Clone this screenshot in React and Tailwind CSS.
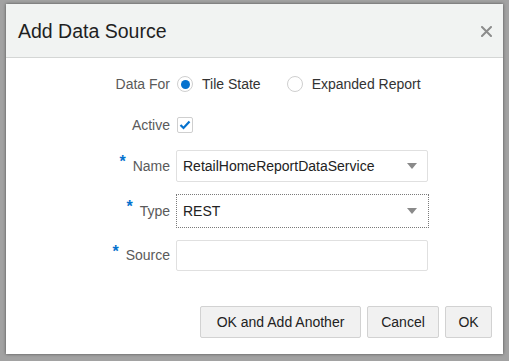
export default function App() {
  const font = { fontFamily: '"Liberation Sans", Arial, sans-serif' };
  const Caret = () => (
    <svg width="10" height="6" viewBox="0 0 10 6" className="shrink-0">
      <path d="M0 0 L10 0 L5 6 Z" fill="#8a8a8a" />
    </svg>
  );
  const Req = () => (
    <span className="text-[#0572ce] text-[16px] font-bold leading-none mr-[7px] -translate-y-[4px]">*</span>
  );
  return (
    <div className="w-[509px] h-[361px] bg-[#a2a2a2] pt-[4px] pl-[6px] overflow-hidden" style={font}>
      <div className="w-[497px] h-[350px] bg-white flex flex-col shadow-[0_0_3px_rgba(0,0,0,0.5)]">
        <div className="h-[54px] bg-[#f1f3f2] border-b border-[#d4d6d5] flex items-center justify-between pl-[12px] pr-[11px] pt-[2px]">
          <span className="text-[19.5px] text-[#1f1f1f]">Add Data Source</span>
          <svg width="11" height="11" viewBox="0 0 11 11">
            <path d="M1 1 L10 10 M10 1 L1 10" stroke="#8c8c8c" strokeWidth="2" strokeLinecap="round" />
          </svg>
        </div>
        <div className="grid grid-cols-[164px_253px] gap-x-[6px] text-[14px] mt-[14px]">
          <div className="h-[24px] flex items-center justify-end text-[#5a5a5a]">Data For</div>
          <div className="h-[24px] flex items-center">
            <span className="ml-[1px] w-[16px] h-[16px] rounded-full border border-[#cfcfcf] flex items-center justify-center">
              <span className="w-[9px] h-[9px] rounded-full bg-[#0572ce]" />
            </span>
            <span className="ml-[9px] text-[#333]">Tile State</span>
            <span className="ml-[26px] w-[16px] h-[16px] rounded-full border border-[#cfcfcf]" />
            <span className="ml-[9px] text-[#333]">Expanded Report</span>
          </div>

          <div className="h-[24px] mt-[17px] flex items-center justify-end text-[#5a5a5a]">Active</div>
          <div className="h-[24px] mt-[17px] flex items-center">
            <span className="ml-[1px] w-[16px] h-[16px] rounded-[2px] border border-[#cfcfcf] flex items-center justify-center">
              <svg width="12" height="10" viewBox="0 0 12 10">
                <path d="M1.5 5 L4.5 8 L10.5 1.5" stroke="#0572ce" strokeWidth="2.2" fill="none" />
              </svg>
            </span>
          </div>

          <div className="h-[32px] mt-[13px] flex items-center justify-end text-[#5a5a5a]"><Req />Name</div>
          <div className="h-[32px] mt-[13px] w-[252px] border border-[#e0e0e0] rounded-[2px] flex items-center justify-between pl-[6px] pr-[10px] text-[#222]">
            <span>RetailHomeReportDataService</span>
            <Caret />
          </div>

          <div className="h-[34px] mt-[12px] flex items-center justify-end text-[#5a5a5a]"><Req />Type</div>
          <div className="h-[34px] mt-[12px] w-[253px] border border-dotted border-[#7a7a7a] flex items-center justify-between pl-[6px] pr-[11px] text-[#222]">
            <span>REST</span>
            <Caret />
          </div>

          <div className="h-[31px] mt-[12px] flex items-center justify-end text-[#5a5a5a]"><Req />Source</div>
          <div className="h-[31px] mt-[12px] w-[252px] border border-[#e0e0e0] rounded-[2px]" />
        </div>
        <div className="flex justify-end gap-[6px] pr-[11px] mt-[35px] text-[14px] text-[#222]">
          <button className="h-[32px] w-[161px] bg-[#f1f1f1] border border-[#d2d2d2] rounded-[2px]">OK and Add Another</button>
          <button className="h-[32px] w-[72px] bg-[#f1f1f1] border border-[#d2d2d2] rounded-[2px]">Cancel</button>
          <button className="h-[32px] w-[47px] bg-[#f1f1f1] border border-[#d2d2d2] rounded-[2px]">OK</button>
        </div>
      </div>
    </div>
  );
}
